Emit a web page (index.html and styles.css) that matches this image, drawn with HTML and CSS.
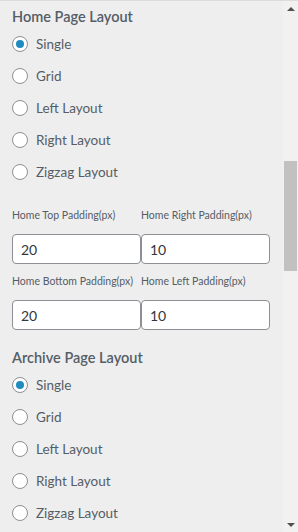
FILE: index.html
```html
<!DOCTYPE html>
<html lang="en">
<head>
  <meta charset="UTF-8" />
  <meta name="viewport" content="width=device-width, initial-scale=1.0"/>
  <title>Layout Settings</title>
  <link rel="stylesheet" href="styles.css">
</head>
<body>
  <div class="panel">
    <div class="content">
      <section class="group">
        <h3 class="group-title">Home Page Layout</h3>
        <label class="radio"><span class="dot checked"></span>Single</label>
        <label class="radio"><span class="dot"></span>Grid</label>
        <label class="radio"><span class="dot"></span>Left Layout</label>
        <label class="radio"><span class="dot"></span>Right Layout</label>
        <label class="radio"><span class="dot"></span>Zigzag Layout</label>
      </section>

      <div class="fields">
        <div class="field">
          <label class="field-label">Home Top Padding(px)</label>
          <input class="field-input" type="text" value="20">
        </div>
        <div class="field">
          <label class="field-label">Home Right Padding(px)</label>
          <input class="field-input" type="text" value="10">
        </div>
        <div class="field">
          <label class="field-label">Home Bottom Padding(px)</label>
          <input class="field-input" type="text" value="20">
        </div>
        <div class="field">
          <label class="field-label">Home Left Padding(px)</label>
          <input class="field-input" type="text" value="10">
        </div>
      </div>

      <section class="group archive">
        <h3 class="group-title">Archive Page Layout</h3>
        <label class="radio"><span class="dot checked"></span>Single</label>
        <label class="radio"><span class="dot"></span>Grid</label>
        <label class="radio"><span class="dot"></span>Left Layout</label>
        <label class="radio"><span class="dot"></span>Right Layout</label>
        <label class="radio"><span class="dot"></span>Zigzag Layout</label>
      </section>
    </div>

    <div class="scrollbar">
      <div class="arrow up"></div>
      <div class="track">
        <div class="thumb"></div>
      </div>
      <div class="arrow down"></div>
    </div>
  </div>
</body>
</html>
```

FILE: styles.css
```css
html, body {
  margin: 0;
  padding: 0;
}

body {
  font-family: Lato, 'Noto Sans', sans-serif;
  background: #eeeeee;
  color: #555d66;
}

.panel {
  display: flex;
  height: 532px;
  box-sizing: border-box;
  border-top: 1px solid #dcdcdc;
  overflow: hidden;
}

.content {
  flex: 1;
  padding: 6px 0 0 12px;
  overflow: hidden;
}

.group-title {
  margin: 0 0 1px;
  font-size: 14.5px;
  font-weight: 600;
  line-height: 20px;
  color: #555d66;
}

.radio {
  display: flex;
  align-items: center;
  height: 32px;
  font-size: 13.5px;
  color: #555d66;
}

.dot {
  width: 16px;
  height: 16px;
  box-sizing: border-box;
  border: 1px solid #8c8f94;
  border-radius: 50%;
  background: #fff;
  margin-right: 8px;
  display: flex;
  align-items: center;
  justify-content: center;
}

.dot.checked::after {
  content: "";
  width: 8px;
  height: 8px;
  border-radius: 50%;
  background: #1e8cbe;
}

.fields {
  display: grid;
  grid-template-columns: 129px 129px;
  row-gap: 9px;
  margin-top: 19px;
}

.field {
  display: flex;
  flex-direction: column;
}

.field-label {
  font-size: 10.5px;
  line-height: 16px;
  margin-bottom: 11px;
  color: #555d66;
  white-space: nowrap;
}

.field-input {
  height: 30px;
  box-sizing: border-box;
  width: 100%;
  margin: 0;
  padding: 0 8px;
  border: 1px solid #8c8f94;
  border-radius: 4px;
  background: #fff;
  font-family: inherit;
  font-size: 14px;
  color: #32373c;
}

.archive {
  margin-top: 18px;
}

.scrollbar {
  width: 15px;
  display: flex;
  flex-direction: column;
  background: #f1f1f1;
}

.arrow {
  height: 15px;
  display: flex;
  align-items: center;
  justify-content: center;
}

.arrow::after {
  content: "";
  border-left: 4px solid transparent;
  border-right: 4px solid transparent;
}

.arrow.up::after {
  border-bottom: 4px solid #505050;
}

.arrow.down::after {
  border-top: 4px solid #505050;
}

.track {
  flex: 1;
}

.thumb {
  margin: 145px 0 0 1px;
  width: 13px;
  height: 110px;
  background: #c1c1c1;
}
```
